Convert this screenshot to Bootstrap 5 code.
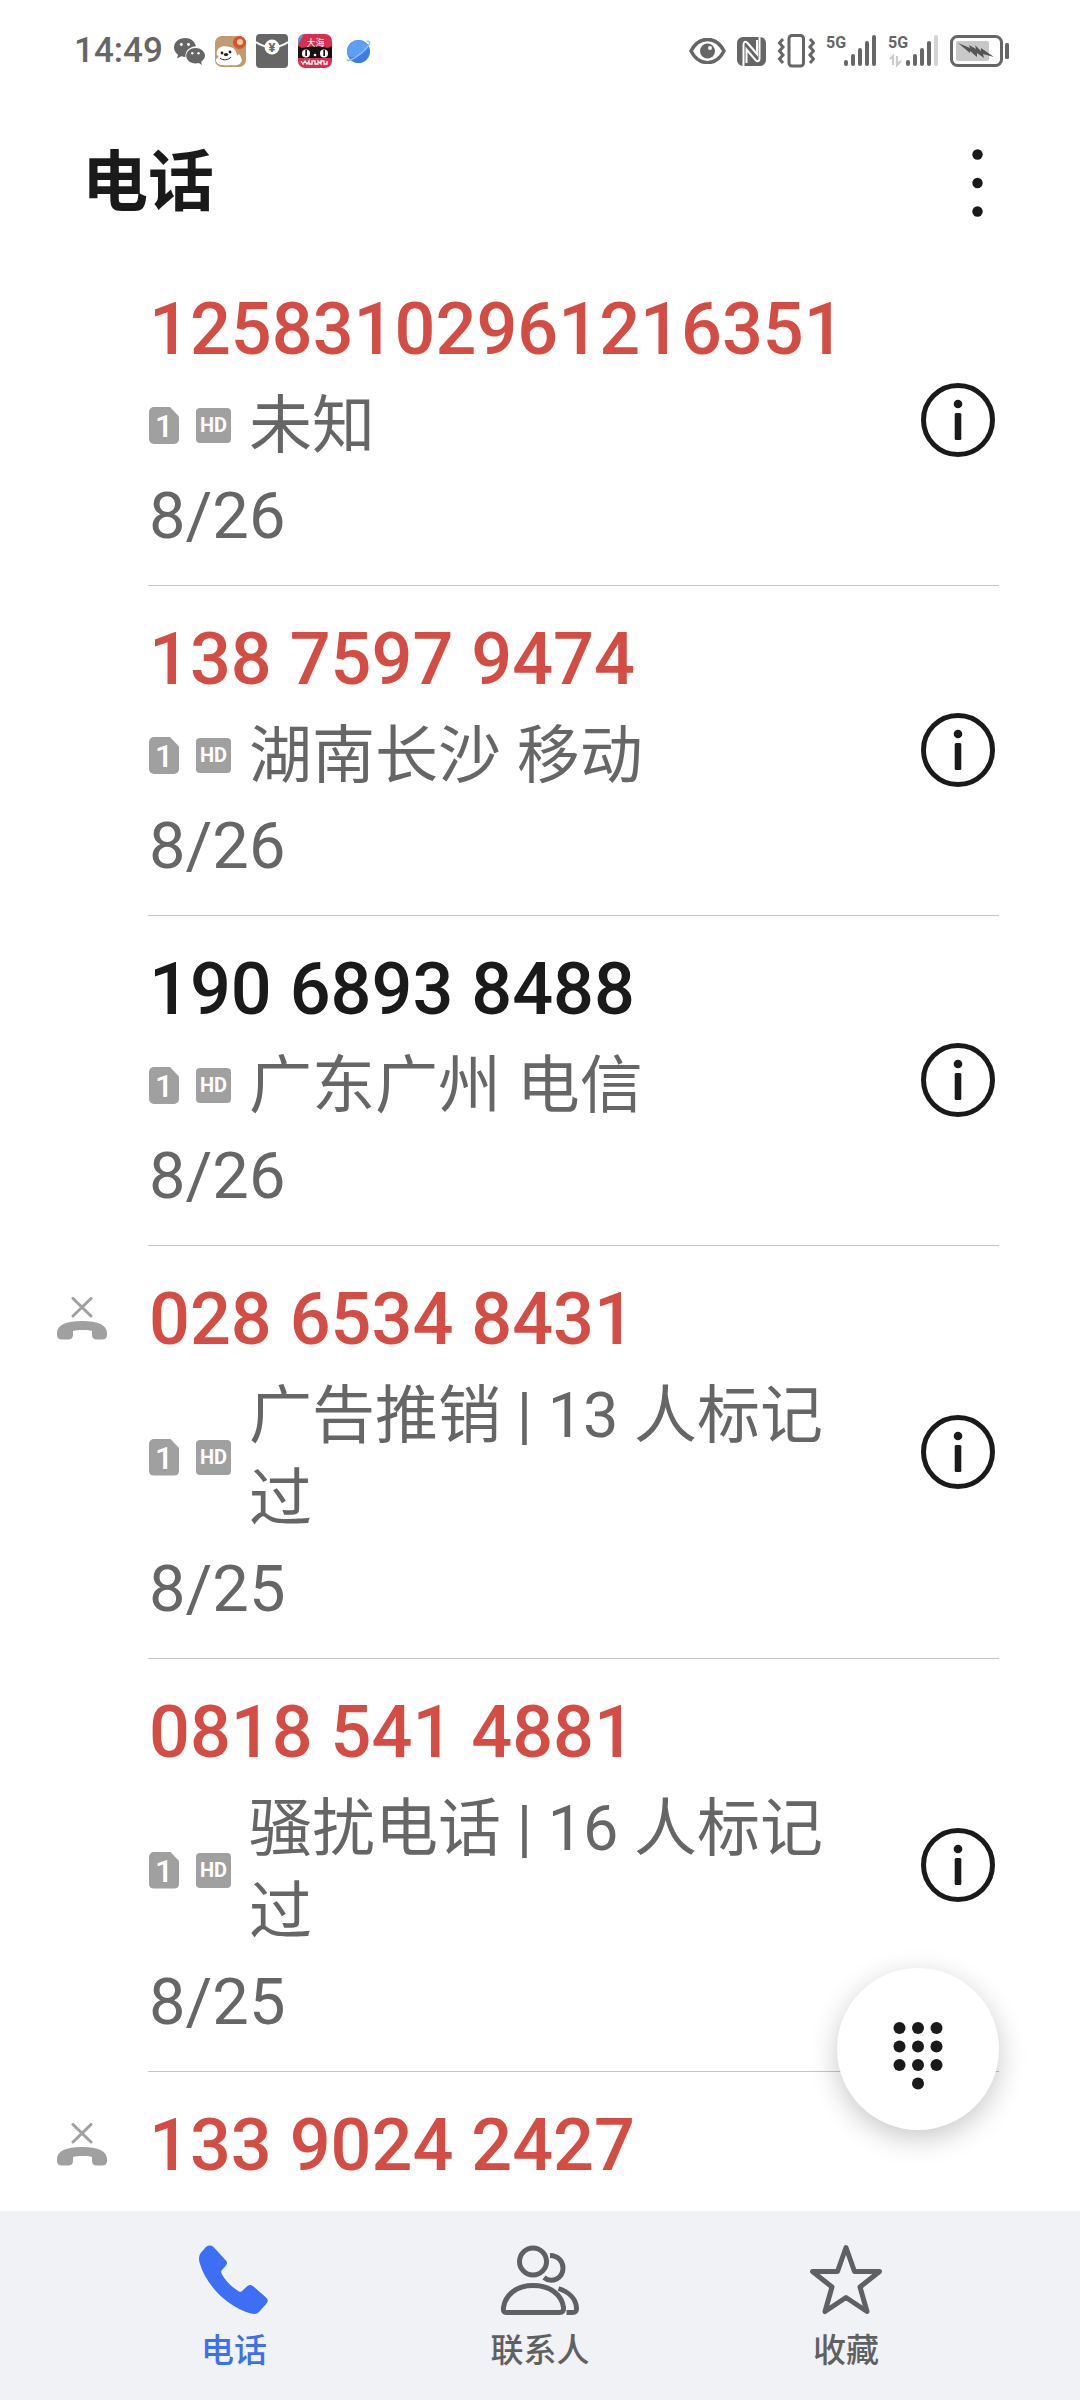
<!DOCTYPE html>
<html lang="zh-CN">
<head>
<meta charset="utf-8">
<meta name="viewport" content="width=device-width, initial-scale=1">
<title>电话</title>
<link href="https://cdn.jsdelivr.net/npm/bootstrap@5.3.0/dist/css/bootstrap.min.css" rel="stylesheet">
<style>
  :root { --ink: #1a1a1a; --muted: #666; --soft: #a0a0a0; --alert: #d44d44; --accent: #3d6ff5; }
  body { font-family: Roboto, "Noto Sans CJK SC", sans-serif; color: var(--ink); background: #fff; }
  svg { display: block; flex: none; }
  .status-bar { height: 102px; padding: 0 70px 0 74px; color: var(--muted); }
  .clock { font-size: 35px; line-height: 40px; font-weight: 500; margin-right: 11px; }
  .status-apps { gap: 10px; }
  .status-signals { gap: 11px; }
  .app-header { height: 154px; padding: 8px 81px 0 82px; }
  .app-title { font-size: 66px; line-height: 96px; font-weight: 700; }
  .plain-btn { border: 0; background: none; padding: 0; color: inherit; }
  .call-log { min-height: 0; }
  .call-row { padding: 0 81px 0 57px; }
  .call-lead { width: 91px; padding-top: 51px; color: var(--soft); }
  .call-body { border-bottom: 1px solid #c4c4c4; padding: 26px 4px 27px 1px; }
  .call-text { padding-right: 48px; }
  .call-number { font-size: 72px; line-height: 96px; font-weight: 500; margin-bottom: 6px; }
  .missed { color: var(--alert); }
  .call-place { font-size: 63px; line-height: 83px; color: var(--muted); }
  .call-tags { gap: 17px; width: 100px; }
  .sim-tag, .hd-tag { background: var(--soft); color: #fff; text-align: center; font-weight: 500; }
  .sim-tag { width: 30px; height: 37px; border-radius: 5px; font-size: 32px; line-height: 39px; clip-path: polygon(0 0, 70% 0, 100% 26%, 100% 100%, 0 100%); }
  .hd-tag { width: 35px; height: 35px; border-radius: 4px; font-size: 20px; line-height: 35px; font-weight: 700; }
  .call-date { font-size: 65px; line-height: 84px; color: var(--muted); margin-top: 7px; }
  .dial-btn { right: 81px; bottom: 81px; width: 162px; height: 162px; background: #fff; box-shadow: 0 8px 28px rgba(0,0,0,.22); }
  .dial-btn svg { margin-top: 14px; }
  .tab-bar { height: 189px; padding: 33px 81px 0; background: #f0f2f5; }
  .tab-link { color: #5f6062; font-size: 33px; line-height: 44px; font-weight: 500; text-decoration: none; gap: 13px; }
  .tab-link.active { color: var(--accent); }
</style>
<script src="https://cdn.jsdelivr.net/npm/bootstrap@5.3.0/dist/js/bootstrap.bundle.min.js"></script>
</head>
<body>
<svg width="0" height="0" class="position-absolute" aria-hidden="true">
  <symbol id="info" viewBox="0 0 74 74">
    <circle cx="37" cy="37" r="34.5" fill="none" stroke="currentColor" stroke-width="5"/>
    <circle cx="37" cy="21" r="4.3" fill="currentColor"/>
    <rect x="33.7" y="30" width="6.6" height="27" rx="1.5" fill="currentColor"/>
  </symbol>
  <symbol id="missed-call" viewBox="0 0 50 43">
    <path d="M16 1.5 34 19M34 1.5 16 19" stroke="currentColor" stroke-width="3" stroke-linecap="round"/>
    <path d="M0 36c0-8 9-12 25-12s25 4 25 12v2c0 3-2 4.500-5 4.500h-5c-3 0-5-1.500-5-4.500v-4c-2-1.500-17-1.500-19 0v4c0 3-2 4.500-5 4.500H5c-3 0-5-1.500-5-4.500z" fill="currentColor"/>
  </symbol>
</svg>

<div class="vh-100 d-flex flex-column overflow-hidden">
  <div class="status-bar d-flex justify-content-between align-items-center flex-shrink-0">
    <div class="d-flex align-items-center">
      <span class="clock">14:49</span>
      <div class="status-apps d-flex align-items-center">
        <svg width="31" height="27" viewBox="0 0 31 27">
          <path d="M11 0C5 0 0 4 0 9.500c0 3 1.500 5.500 4 7.300L3 20.500l4.300-2.200c1.300.4 2.700.6 4.200.6C11 13 15.500 8.500 22 8.300 21 3.500 16.500 0 11 0z" fill="#666"/>
          <path d="M21.500 10c-5 0-9.300 3.500-9.300 7.800s4.300 7.700 9.300 7.700c1.100 0 2.200-.2 3.200-.5l3.300 1.900-.9-3.200c2.200-1.400 3.900-3.500 3.900-5.900 0-4.300-4.500-7.800-9.500-7.800z" fill="#666"/>
          <g fill="#fff"><circle cx="7.300" cy="6.500" r="1.400"/><circle cx="14.500" cy="6.500" r="1.400"/><circle cx="18.300" cy="15.300" r="1.200"/><circle cx="24.500" cy="15.300" r="1.200"/></g>
        </svg>
        <svg width="31" height="31" viewBox="0 0 31 31">
          <rect width="31" height="31" rx="7" fill="#c09a70"/>
          <circle cx="24.500" cy="6.500" r="6.500" fill="#d5562c"/><circle cx="25" cy="6" r="3" fill="#f3c2a0"/>
          <path d="M2 15c1-4 7-6 13-4 5 1 7 5 7 9 2-3 3-2 5 4-1 5-6 6-11 5C8 30 1 29 1 24c0-2 2-2 3-3-2-1-3-3-2-6z" fill="#fff"/>
          <circle cx="7" cy="17" r="1.400" fill="#222"/><circle cx="15" cy="16" r="1.400" fill="#222"/><ellipse cx="11" cy="18.500" rx="2.200" ry="1.500" fill="#222"/>
          <path d="M5 22c3 3 9 2 11-1" fill="none" stroke="#222"/>
        </svg>
        <svg width="32" height="34" viewBox="0 0 32 34">
          <rect width="32" height="34" rx="4" fill="#666"/>
          <path d="M0 8c5 4 10 5 16 5s11-1 16-5" fill="none" stroke="#fff" stroke-width="2"/>
          <circle cx="16" cy="13" r="7.500" fill="#fff"/>
          <text x="16" y="18" font-size="13" font-weight="700" text-anchor="middle" fill="#666">¥</text>
        </svg>
        <svg width="34" height="34" viewBox="0 0 34 34">
          <rect width="34" height="34" rx="7" fill="#d92f4c"/>
          <path d="M0 11V7a7 7 0 0 1 6-7z" fill="#5e93cf"/>
          <path d="M0 12l4 2c8-2 18-2 26 0l4-2v12H0z" fill="#161214"/>
          <text x="17.500" y="12" font-size="9" text-anchor="middle" fill="#fff">大海</text>
          <circle cx="8" cy="19.500" r="4" fill="#fff"/><circle cx="26" cy="19.500" r="4" fill="#fff"/>
          <rect x="7.300" y="16" width="1.700" height="6" fill="#161214"/><rect x="25.300" y="16" width="1.700" height="6" fill="#161214"/>
          <circle cx="17" cy="21" r="1.300" fill="#fff"/>
          <path d="M3 27l2 3 2-3 2 3 2-3v3h3v-3h3v3h3v-3l3 3v-3h3v3h3v-3" fill="none" stroke="#fff" stroke-width="1.300"/>
        </svg>
        <svg class="ms-1" width="25" height="25" viewBox="0 0 25 25">
          <circle cx="12.500" cy="12.500" r="11.500" fill="#3f7de6"/>
          <path d="M1 12.500a11.500 11.500 0 0 1 21-6.300C18 14 10 19 3 18a11 11 0 0 1-2-5.500z" fill="#5f9ff3"/>
          <path d="M20.500 2.500c6-2 3 5-5 11.500S0 23.500 1.500 20" fill="none" stroke="#8fc0f8" stroke-width="1.500"/>
        </svg>
      </div>
    </div>
    <div class="status-signals d-flex align-items-center">
      <svg width="37" height="26" viewBox="0 0 37 26">
        <path d="M2 13C10-2.500 27-2.500 35 13 27 28.500 10 28.500 2 13z" fill="none" stroke="#666" stroke-width="3.500"/>
        <circle cx="18.500" cy="13" r="7.500" fill="#666"/><circle cx="21" cy="10" r="2" fill="#fff"/>
      </svg>
      <svg width="29" height="29" viewBox="0 0 29 29">
        <rect width="29" height="29" rx="6" fill="#666"/>
        <path d="M6.500 29V7.500c0-3 2-3.500 4-1.500L20 17V3" fill="none" stroke="#fff" stroke-width="2"/>
        <path d="M22.500 0v21.500c0 3-2 3.500-4 1.500L9.500 12.500V26" fill="none" stroke="#fff" stroke-width="2"/>
      </svg>
      <svg width="38" height="34" viewBox="0 0 38 34">
        <rect x="12" y="1.500" width="14.500" height="30.500" rx="3" fill="none" stroke="#666" stroke-width="3"/>
        <path d="M6 5 2.500 9 6 13l-3.500 4L6 21l-3.500 4L6 29M33 5l3.500 4-3.500 4 3.500 4-3.500 4 3.500 4-3.500 4" fill="none" stroke="#666" stroke-width="3"/>
      </svg>
      <svg width="51" height="40" viewBox="0 -4 51 40">
        <text x="0" y="13" font-size="16" font-weight="700" fill="#666">5G</text>
        <g fill="#666"><rect x="18" y="25" width="4" height="6" rx="2"/><rect x="25" y="19" width="4" height="12" rx="2"/><rect x="32" y="13" width="4" height="18" rx="2"/><rect x="39" y="6" width="4" height="25" rx="2"/><rect x="46" y="0" width="4" height="31" rx="2"/></g>
      </svg>
      <svg width="51" height="40" viewBox="0 -4 51 40">
        <text x="0" y="13" font-size="16" font-weight="700" fill="#666">5G</text>
        <path d="M2 24l3-3v9M9 21v9l4-4" fill="none" stroke="#ccc" stroke-width="2.200"/>
        <g fill="#666"><rect x="18" y="25" width="4" height="6" rx="2"/><rect x="25" y="19" width="4" height="12" rx="2"/><rect x="32" y="13" width="4" height="18" rx="2"/><rect x="39" y="6" width="4" height="25" rx="2"/><rect x="46" y="0" width="4" height="31" rx="2" fill="#d4d4d4"/></g>
      </svg>
      <svg width="60" height="32" viewBox="0 0 60 32">
        <rect x="1.500" y="1.500" width="50" height="29" rx="6" fill="none" stroke="#666" stroke-width="3"/>
        <rect x="6" y="6" width="33" height="20" rx="2" fill="#c8c8c8"/>
        <path d="M8 8l12 5-1-3 7 4-1-4 6 6 0-3 13 9-11-3 1 4-7-5 0 4-7-6 0 2z" fill="#555"/>
        <rect x="55" y="8" width="4" height="16" rx="1.500" fill="#666"/>
      </svg>
    </div>
  </div>

  <header class="app-header d-flex justify-content-between align-items-center flex-shrink-0">
    <h1 class="app-title m-0">电话</h1>
    <button class="plain-btn" type="button" aria-label="更多">
      <svg width="42" height="68" viewBox="0 0 42 68" fill="currentColor"><circle cx="20.500" cy="5.500" r="5.200"/><circle cx="20.500" cy="34" r="5.200"/><circle cx="20.500" cy="62.500" r="5.200"/></svg>
    </button>
  </header>

  <main class="call-log flex-grow-1 position-relative">
    <ul class="list-unstyled m-0 h-100 overflow-hidden">
      <li class="call-row d-flex">
        <div class="call-lead flex-shrink-0"></div>
        <div class="call-body flex-grow-1 d-flex align-items-center">
          <div class="call-text flex-grow-1">
            <div class="call-number missed">12583102961216351</div>
            <div class="d-flex align-items-center">
              <div class="call-tags d-flex align-items-center flex-shrink-0"><span class="sim-tag">1</span><span class="hd-tag">HD</span></div>
              <div class="call-place">未知</div>
            </div>
            <div class="call-date">8/26</div>
          </div>
          <button class="plain-btn" type="button" aria-label="详情"><svg width="74" height="74"><use href="#info"/></svg></button>
        </div>
      </li>
      <li class="call-row d-flex">
        <div class="call-lead flex-shrink-0"></div>
        <div class="call-body flex-grow-1 d-flex align-items-center">
          <div class="call-text flex-grow-1">
            <div class="call-number missed">138 7597 9474</div>
            <div class="d-flex align-items-center">
              <div class="call-tags d-flex align-items-center flex-shrink-0"><span class="sim-tag">1</span><span class="hd-tag">HD</span></div>
              <div class="call-place">湖南长沙 移动</div>
            </div>
            <div class="call-date">8/26</div>
          </div>
          <button class="plain-btn" type="button" aria-label="详情"><svg width="74" height="74"><use href="#info"/></svg></button>
        </div>
      </li>
      <li class="call-row d-flex">
        <div class="call-lead flex-shrink-0"></div>
        <div class="call-body flex-grow-1 d-flex align-items-center">
          <div class="call-text flex-grow-1">
            <div class="call-number">190 6893 8488</div>
            <div class="d-flex align-items-center">
              <div class="call-tags d-flex align-items-center flex-shrink-0"><span class="sim-tag">1</span><span class="hd-tag">HD</span></div>
              <div class="call-place">广东广州 电信</div>
            </div>
            <div class="call-date">8/26</div>
          </div>
          <button class="plain-btn" type="button" aria-label="详情"><svg width="74" height="74"><use href="#info"/></svg></button>
        </div>
      </li>
      <li class="call-row d-flex">
        <div class="call-lead flex-shrink-0"><svg width="50" height="43"><use href="#missed-call"/></svg></div>
        <div class="call-body flex-grow-1 d-flex align-items-center">
          <div class="call-text flex-grow-1">
            <div class="call-number missed">028 6534 8431</div>
            <div class="d-flex align-items-center">
              <div class="call-tags d-flex align-items-center flex-shrink-0"><span class="sim-tag">1</span><span class="hd-tag">HD</span></div>
              <div class="call-place">广告推销 | 13 人标记过</div>
            </div>
            <div class="call-date">8/25</div>
          </div>
          <button class="plain-btn" type="button" aria-label="详情"><svg width="74" height="74"><use href="#info"/></svg></button>
        </div>
      </li>
      <li class="call-row d-flex">
        <div class="call-lead flex-shrink-0"></div>
        <div class="call-body flex-grow-1 d-flex align-items-center">
          <div class="call-text flex-grow-1">
            <div class="call-number missed">0818 541 4881</div>
            <div class="d-flex align-items-center">
              <div class="call-tags d-flex align-items-center flex-shrink-0"><span class="sim-tag">1</span><span class="hd-tag">HD</span></div>
              <div class="call-place">骚扰电话 | 16 人标记过</div>
            </div>
            <div class="call-date">8/25</div>
          </div>
          <button class="plain-btn" type="button" aria-label="详情"><svg width="74" height="74"><use href="#info"/></svg></button>
        </div>
      </li>
      <li class="call-row d-flex">
        <div class="call-lead flex-shrink-0"><svg width="50" height="43"><use href="#missed-call"/></svg></div>
        <div class="call-body flex-grow-1 d-flex align-items-center">
          <div class="call-text flex-grow-1">
            <div class="call-number missed">133 9024 2427</div>
          </div>
        </div>
      </li>
    </ul>
    <button class="dial-btn plain-btn position-absolute rounded-circle d-flex align-items-center justify-content-center" type="button" aria-label="拨号盘">
      <svg width="50" height="68" viewBox="0 0 50 68" fill="currentColor">
        <circle cx="6.500" cy="6" r="6"/><circle cx="25" cy="6" r="6"/><circle cx="43.500" cy="6" r="6"/>
        <circle cx="6.500" cy="24.500" r="6"/><circle cx="25" cy="24.500" r="6"/><circle cx="43.500" cy="24.500" r="6"/>
        <circle cx="6.500" cy="43" r="6"/><circle cx="25" cy="43" r="6"/><circle cx="43.500" cy="43" r="6"/>
        <circle cx="25" cy="61.500" r="6"/>
      </svg>
    </button>
  </main>

  <nav class="tab-bar d-flex flex-shrink-0">
    <a href="#calls" class="tab-link active d-flex flex-column align-items-center flex-fill w-100" aria-current="page">
      <svg width="70" height="72" viewBox="0 0 70 72" fill="currentColor"><path d="M7 3C9.500 1 12.500 1 15 3.500L26 15.500C28.500 18 28.500 19.500 27 21.500L22.500 26.500C22 27.500 22 28.500 23 30.500C27 37.500 32.500 43 40 47.500C41 48 42 48 43 47L48.500 42C50.500 40.500 52 40.500 54.500 42.500L66.500 53C69 55.500 69.500 57 67.500 59.500L61 67C58.500 70 56 70.500 52 69.500C28 63 7 41 .5 18.500C-.5 14 0 11 2.500 8z"/></svg>
      <span>电话</span>
    </a>
    <a href="#contacts" class="tab-link d-flex flex-column align-items-center flex-fill w-100">
      <svg width="78" height="72" viewBox="0 0 78 72" fill="none" stroke="currentColor" stroke-width="5">
        <circle cx="32" cy="17.500" r="13.500"/>
        <path d="M49 11.500c8 0 13 6 13 12.500 0 10-11 16-19 9.500"/>
        <path d="M32 41.500c18 0 29 10 30.500 22 .4 3-1 5-4 5h-53c-3 0-3.400-2-3-5C4 51.500 15 41.500 32 41.500z"/>
        <path d="M57.500 44.500C68 48 75 55 75.500 64c.2 3-1 4.500-4 4.500h-6"/>
      </svg>
      <span>联系人</span>
    </a>
    <a href="#favorites" class="tab-link d-flex flex-column align-items-center flex-fill w-100">
      <svg width="72" height="72" viewBox="0 0 72 72" fill="none" stroke="currentColor" stroke-width="5" stroke-linejoin="round"><path d="M36 3.500 44.500 27.500H69.500L50 43 57 67.500 36 53.500 15 67.500 22 43 2.500 27.500H27.500z"/></svg>
      <span>收藏</span>
    </a>
  </nav>
</div>
</body>
</html>
